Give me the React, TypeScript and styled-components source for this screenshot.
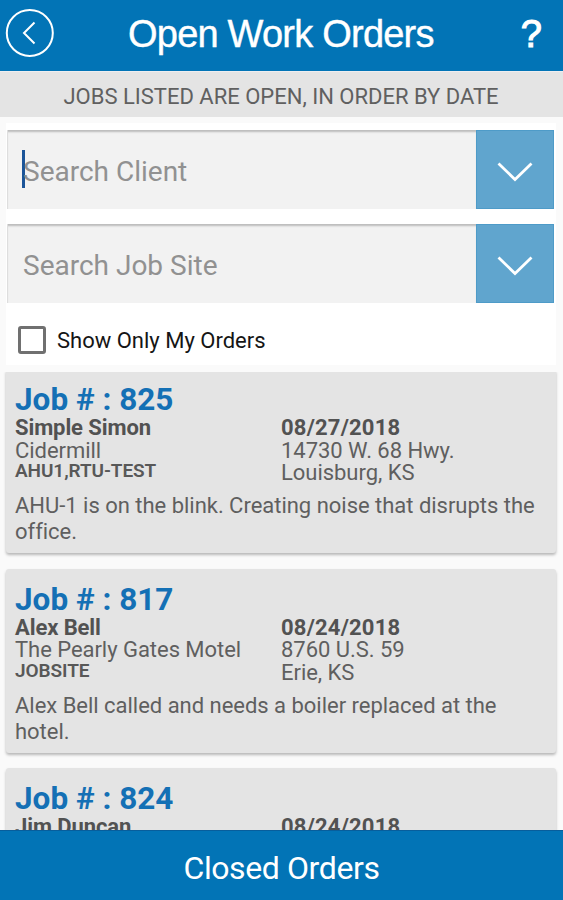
import React from "react";
import styled, { createGlobalStyle } from "styled-components";

const GlobalStyle = createGlobalStyle`
  * { box-sizing: border-box; }
  body { margin: 0; background: #fafafa; font-family: Roboto, sans-serif; }
`;

const Screen = styled.div`
  display: flex;
  flex-direction: column;
  height: 900px;
  overflow: hidden;
  background: #fafafa;
`;

const Header = styled.header`
  display: flex;
  align-items: center;
  flex: 0 0 71px;
  padding: 0 21px 3px 5px;
  background: #0274b6;
  color: #fff;
`;

const IconButton = styled.button`
  display: flex;
  padding: 0;
  border: 0;
  background: none;
  color: inherit;
  cursor: pointer;
`;

const Title = styled.h1`
  flex: 1;
  margin: 0;
  padding-left: 73px;
  font: 400 38px/44px "Liberation Sans", sans-serif;
  letter-spacing: -0.78px;
  white-space: nowrap;
  -webkit-text-stroke: 0.4px #fff;
`;

const Help = styled.button`
  padding: 0;
  border: 0;
  background: none;
  color: #fff;
  font: 400 38px/44px "Liberation Sans", sans-serif;
  -webkit-text-stroke: 1.1px #fff;
  cursor: pointer;
`;

const Notice = styled.div`
  flex: 0 0 46px;
  height: 46px;
  border-top: 1px solid #eeeef0;
  background: #e4e4e4;
  color: #606060;
  font-size: 22px;
  line-height: 49px;
  text-align: center;
  white-space: nowrap;
  text-indent: -1px;
`;

const Filters = styled.section`
  display: flex;
  flex-direction: column;
  flex: 0 0 auto;
  gap: 15px;
  width: 550px;
  height: 242px;
  margin: 6px 0 7px 6px;
  padding: 7px 2px 0 1px;
  background: #fff;
`;

const SearchRow = styled.div`
  display: flex;
  flex: 0 0 79px;
`;

const SearchField = styled.div`
  display: flex;
  align-items: center;
  flex: 1;
  padding: 4px 0 0 15px;
  border-left: 1px solid #dedede;
  background: #f2f2f2;
  box-shadow: inset 0 3px 2px -1px #bcbcbc;
  color: #919191;
  font-size: 28px;
`;

const Caret = styled.span`
  width: 3px;
  height: 38px;
  margin: -5px -2px 0 -1px;
  background: #1c5599;
`;

const DropButton = styled.button`
  display: grid;
  place-items: center;
  width: 78px;
  padding: 5px 0 0;
  border: 1px solid #4e9bc8;
  background: #60a5ce;
  cursor: pointer;
`;

const CheckRow = styled.label`
  display: flex;
  align-items: center;
  gap: 11px;
  margin: 7px 0 0 11px;
  color: #151515;
  font-size: 22px;
  line-height: 28px;
`;

const Checkbox = styled.span`
  width: 28px;
  height: 28px;
  border: 3px solid #707070;
  border-radius: 3px;
`;

const CheckLabel = styled.span`
  padding-top: 2px;
`;

const Jobs = styled.main`
  display: flex;
  flex-direction: column;
  flex: 1;
  gap: 15.5px;
  min-height: 0;
  padding: 0 7px 0 6px;
  overflow: hidden;
`;

const Card = styled.article`
  flex: 0 0 184px;
  padding: 14px 9px 0;
  border-radius: 3px;
  background: #e4e4e4;
  box-shadow: 0 2px 3px rgba(0, 0, 0, 0.27);
  color: #5f5f5f;

  &:first-child {
    margin-top: -3px;
  }
`;

const JobNumber = styled.h2`
  margin: 0;
  color: #1470b5;
  font-size: 31.5px;
  font-weight: 700;
  line-height: 34px;
`;

const Details = styled.div`
  display: grid;
  grid-template-columns: 266px 1fr;
  height: 72px;
  font-size: 22px;
  line-height: 22.5px;
  letter-spacing: -0.04px;
  white-space: nowrap;
`;

const Strong = styled.div<{ $spacing?: number }>`
  color: #525252;
  font-weight: 700;
  letter-spacing: ${({ $spacing = -0.1 }) => $spacing}px;
`;

const Site = styled.div`
  color: #585858;
  font-size: 19px;
  font-weight: 600;
  line-height: 17px;
  letter-spacing: -0.08px;
`;

const Description = styled.p`
  margin: 4px 0 0;
  font-size: 22px;
  line-height: 26px;
  letter-spacing: -0.02px;
`;

const Footer = styled.button`
  flex: 0 0 70px;
  padding: 5px 0 0;
  border: 0;
  border-top: 1px solid #075e9c;
  background: #0274b6;
  color: #fff;
  font: 400 32px/38px Roboto, sans-serif;
  letter-spacing: -0.4px;
  cursor: pointer;
`;

const jobs = [
  {
    number: 825,
    client: "Simple Simon",
    place: "Cidermill",
    site: "AHU1,RTU-TEST",
    date: "08/27/2018",
    street: "14730 W. 68 Hwy.",
    city: "Louisburg, KS",
    note: "AHU-1 is on the blink. Creating noise that disrupts the office.",
  },
  {
    number: 817,
    client: "Alex Bell",
    place: "The Pearly Gates Motel",
    site: "JOBSITE",
    date: "08/24/2018",
    street: "8760 U.S. 59",
    city: "Erie, KS",
    note: "Alex Bell called and needs a boiler replaced at the hotel.",
  },
  { number: 824, client: "Jim Duncan", date: "08/24/2018" },
];

function SearchBox({ label, focused }: { label: string; focused?: boolean }) {
  return (
    <SearchRow>
      <SearchField>
        {focused && <Caret />}
        <span>{label}</span>
      </SearchField>
      <DropButton aria-label={label}>
        <svg width="36" height="20" viewBox="0 0 36 20" fill="none" stroke="#fff" strokeWidth="2.8">
          <path d="M1.5 1.5 18 17.5 34.5 1.5" />
        </svg>
      </DropButton>
    </SearchRow>
  );
}

export default function App() {
  return (
    <Screen>
      <GlobalStyle />
      <Header>
        <IconButton aria-label="Back">
          <svg width="50" height="50" viewBox="0 0 50 50" fill="none" stroke="#fff" strokeWidth="2">
            <circle cx="24.8" cy="24" r="23" />
            <path d="M29.5 13.5 19 24 29.5 34.5" />
          </svg>
        </IconButton>
        <Title>Open Work Orders</Title>
        <Help aria-label="Help">?</Help>
      </Header>
      <Notice>JOBS LISTED ARE OPEN, IN ORDER BY DATE</Notice>
      <Filters>
        <SearchBox label="Search Client" focused />
        <SearchBox label="Search Job Site" />
        <CheckRow>
          <Checkbox />
          <CheckLabel>Show Only My Orders</CheckLabel>
        </CheckRow>
      </Filters>
      <Jobs>
        {jobs.map((job) => (
          <Card key={job.number}>
            <JobNumber>Job # : {job.number}</JobNumber>
            <Details>
              <div>
                <Strong>{job.client}</Strong>
                <div>{job.place}</div>
                <Site>{job.site}</Site>
              </div>
              <div>
                <Strong $spacing={0.2}>{job.date}</Strong>
                <div>{job.street}</div>
                <div>{job.city}</div>
              </div>
            </Details>
            <Description>{job.note}</Description>
          </Card>
        ))}
      </Jobs>
      <Footer>Closed Orders</Footer>
    </Screen>
  );
}
